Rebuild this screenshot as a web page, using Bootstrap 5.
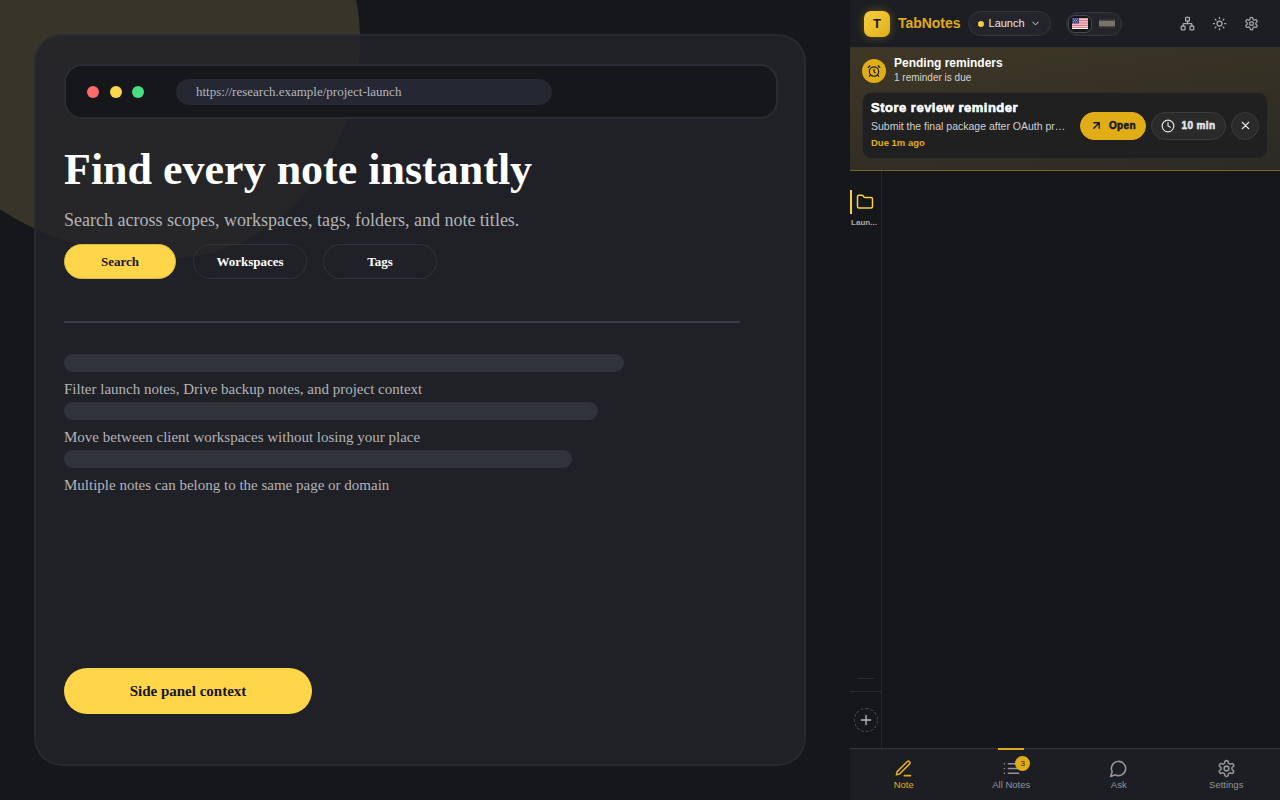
<!DOCTYPE html>
<html lang="en">
<head>
    <meta charset="UTF-8">
    <meta name="viewport" content="width=device-width, initial-scale=1.0">
    <title>TabNotes</title>
    <link href="https://cdn.jsdelivr.net/npm/bootstrap@5.3.0/dist/css/bootstrap.min.css" rel="stylesheet">
    <style>
        html, body { height: 100%; }
        body { background: #15171b; overflow: hidden; font-family: "Liberation Sans", Arial, sans-serif; }
        svg.ico { fill: none; stroke: currentColor; stroke-width: 2; stroke-linecap: round; stroke-linejoin: round; display: block; flex: none; }

        .stage { width: 850px; height: 800px; padding: 34px 44px 34px 34px; position: relative; overflow: hidden; font-family: "Liberation Serif", "Times New Roman", serif; }
        .glow { position: absolute; left: -90px; top: -160px; width: 450px; height: 418px; border-radius: 0 190px 190px 260px / 0 200px 218px 200px; background: #39342a; }
        .frame { position: relative; height: 732px; border: 2px solid rgba(48, 51, 58, .45); border-radius: 28px; background: rgba(34, 36, 41, .84); padding: 28px; display: flex; flex-direction: column; }
        .addr { height: 55px; width: 714px; flex: none; background: #15171b; border: 2px solid #292c33; border-radius: 18px; padding: 0 21px; }
        .dot { width: 12px; height: 12px; border-radius: 50%; }
        .dot-row { gap: 10.5px; }
        .url-pill { margin-left: 32px; width: 376px; height: 26px; border-radius: 13px; background: #252833; color: #b4b7bd; font-size: 13px; padding-left: 20px; line-height: 26px; }
        .hero { color: #fff; font-family: inherit; font-size: 44px; font-weight: 700; line-height: 50px; margin: 26px 0 0; }
        .sub { color: #b2b4b9; font-size: 18px; line-height: 24px; margin: 13px 0 0; }
        .pill-row { margin-top: 12px; }
        .pill { height: 35px; border-radius: 18px; font-size: 13px; font-weight: 700; display: flex; align-items: center; justify-content: center; border: 1.5px solid #30333a; color: #fff; background: transparent; padding: 0; font-family: inherit; }
        .pill-on { background: #ffd54a; color: #15171b; border-color: #d9b743; }
        .rule { width: 676px; height: 2px; background: #3a3d44; margin-top: 42px; }
        .skel { height: 18px; border-radius: 9px; background: #30333a; }
        .skel-text { color: #b2b4b9; font-size: 15px; line-height: 20px; margin: 7px 0 3px; }
        .cta { width: 248px; height: 46px; border-radius: 23px; border: 0; background: #ffd54a; color: #15171b; font-family: inherit; font-size: 15px; font-weight: 700; margin-top: auto; margin-bottom: 22px; }

        .panel { width: 430px; height: 800px; }
        .topbar { height: 48px; flex: none; background: #1c1e23; border-bottom: 1px solid #37342a; padding: 0 14px; color: #a9abb0; }
        .logo { width: 26px; height: 26px; border-radius: 7px; background: linear-gradient(135deg, #f7cf3f, #dfae1a); box-shadow: 0 0 8px rgba(234, 179, 8, .35); color: #15171b; font-size: 13px; font-weight: 700; }
        .brand { color: #e0ad17; font-size: 14px; font-weight: 700; margin-left: 8px; letter-spacing: -.03px; }
        .scope { margin-left: 7px; width: 83px; height: 25px; border-radius: 13px; border: 1px solid #33353b; background: #23252a; color: #e8e8ea; font-size: 11px; padding: 0 9px; gap: 5px; }
        .scope i { width: 6px; height: 6px; border-radius: 50%; background: #f5cf45; display: block; flex: none; }
        .flags { margin-left: 15px; width: 56px; height: 24px; border-radius: 12px; border: 1px solid #33353b; background: #23252a; padding: 1px; gap: 7px; }
        .flag-on { width: 24px; height: 18px; border-radius: 7px; border: 1px solid #474a52; background: #15171b; }
        .top-icons { gap: 17px; margin-right: 7px; }
        .band { height: 123px; flex: none; background: linear-gradient(170deg, #3f3726, #2b2a24); border-bottom: 1px solid #7a6420; padding: 8px 12px 0; }
        .alarm { width: 24px; height: 24px; border-radius: 50%; background: #e0ad17; color: #15171b; margin-top: 3px; }
        .band-title { color: #fff; font-size: 12px; font-weight: 700; line-height: 15px; }
        .band-sub { color: #d5d4ce; font-size: 10px; line-height: 14px; }
        .remind { height: 67px; margin-top: 7px; border: 1px solid #2c2c2c; border-radius: 10px; background: #202020; padding: 0 8px; }
        .remind-text { min-width: 0; margin-bottom: 2px; }
        .remind-title { color: #fff; font-size: 13px; font-weight: 700; line-height: 16px; letter-spacing: .5px; -webkit-text-stroke: .6px #fff; }
        .remind-body { color: #d0d0d0; font-size: 10.5px; line-height: 14px; margin-top: 3px; white-space: nowrap; }
        .remind-due { color: #e0ad17; font-size: 9.5px; font-weight: 700; line-height: 12px; margin-top: 4px; }
        .act { height: 28px; border-radius: 14px; font-size: 10px; font-weight: 700; letter-spacing: .4px; -webkit-text-stroke: .5px currentColor; gap: 6px; border: 1px solid #3b3b3b; background: #2a2a2a; color: #e6e6e6; padding: 0; }
        .act-open { width: 66px; background: #e0ad17; border-color: #e0ad17; color: #15171b; }
        .act-open svg { stroke-width: 2.5; }
        .act-snooze { width: 75px; margin-left: 5px; }
        .act-close { width: 28px; margin-left: 5px; }

        .middle { flex: 1; min-height: 0; }
        .rail { width: 32px; border-right: 1px solid #25272c; }
        .rail-tab { height: 25px; width: 100%; margin-top: 18px; padding-right: 2px; color: #f5cf45; position: relative; }
        .rail-mark { position: absolute; left: 0; top: 1px; width: 2px; height: 24px; background: #f5cf45; }
        .rail-label { color: #a9abb0; font-size: 8px; font-weight: 700; line-height: 10px; margin-top: 4px; padding-right: 3px; text-align: center; }
        .rail-dash { width: 16px; height: 1px; background: #2a2c31; margin: 0 auto 12px; }
        .rail-sep { height: 1px; background: #2a2c31; margin-bottom: 16px; }
        .rail-add { width: 24px; height: 24px; border-radius: 50%; border: 1px dashed #4a4c52; color: #b8babe; margin: 0 auto 16px; }

        .tabs { height: 52px; flex: none; background: #1c1e23; border-top: 1px solid #34363b; }
        .tab-item { width: 25%; color: #92949a; font-size: 9.5px; line-height: 12px; position: relative; padding-top: 10px; }
        .tab-name { margin-top: 1px; }
        .tab-on { color: #e0ad17; }
        .tab-mark { position: absolute; top: -1px; left: 50%; margin-left: -13px; width: 26px; height: 2px; background: #e0ad17; }
        .tab-count { position: absolute; top: 7px; left: 50%; margin-left: 4px; width: 15px; height: 15px; border-radius: 50%; background: #e0ad17; color: #15171b; font-size: 8px; line-height: 15px; text-align: center; }
    </style>
</head>
<body>
<div class="d-flex">
    <div class="stage">
        <div class="glow"></div>
        <div class="frame">
            <div class="addr d-flex align-items-center">
                <div class="d-flex dot-row">
                    <div class="dot" style="background:#ff6b6b"></div>
                    <div class="dot" style="background:#ffd54a"></div>
                    <div class="dot" style="background:#4ade80"></div>
                </div>
                <div class="url-pill">https://research.example/project-launch</div>
            </div>
            <h1 class="hero">Find every note instantly</h1>
            <p class="sub">Search across scopes, workspaces, tags, folders, and note titles.</p>
            <div class="d-flex pill-row">
                <button class="pill pill-on" style="width:112px">Search</button>
                <button class="pill" style="width:114px;margin-left:17px">Workspaces</button>
                <button class="pill" style="width:114px;margin-left:16px">Tags</button>
            </div>
            <div class="rule"></div>
            <div class="skel" style="width:560px;margin-top:31px"></div>
            <div class="skel-text">Filter launch notes, Drive backup notes, and project context</div>
            <div class="skel" style="width:534px"></div>
            <div class="skel-text">Move between client workspaces without losing your place</div>
            <div class="skel" style="width:508px"></div>
            <div class="skel-text">Multiple notes can belong to the same page or domain</div>
            <button class="cta">Side panel context</button>
        </div>
    </div>

    <div class="panel d-flex flex-column">
        <div class="topbar d-flex align-items-center">
            <div class="logo d-flex align-items-center justify-content-center">T</div>
            <div class="brand">TabNotes</div>
            <div class="scope d-flex align-items-center">
                <i></i><span>Launch</span>
                <svg class="ico ms-auto" width="11" height="11" viewBox="0 0 24 24"><path d="m6 9 6 6 6-6"/></svg>
            </div>
            <div class="flags d-flex align-items-center">
                <div class="flag-on d-flex align-items-center justify-content-center">
                    <svg width="16" height="11" viewBox="0 0 16 11"><rect width="16" height="11" fill="#f2f0f0"/><path d="M0 .8h16M0 2.5h16M0 4.2h16M0 5.9h16M0 7.6h16M0 9.3h16" stroke="#d9606f" stroke-width=".9"/><rect width="7" height="5.5" fill="#3e3f78"/><path d="M1 1h.8M3 1h.8M5 1h.8M2 2.5h.8M4 2.5h.8M1 4h.8M3 4h.8M5 4h.8" stroke="#dcdce8" stroke-width=".8"/></svg>
                </div>
                <svg width="16" height="11" viewBox="0 0 16 11"><rect width="16" height="11" fill="#2a2527"/><rect y="2.5" width="16" height="6" fill="#77736a"/><rect y="1.5" width="16" height="1" fill="#453a3e"/><rect y="8.5" width="16" height="1" fill="#453a3e"/></svg>
            </div>
            <div class="d-flex align-items-center ms-auto top-icons">
                <svg class="ico" width="15" height="15" viewBox="0 0 24 24"><rect x="16" y="16" width="6" height="6" rx="1"/><rect x="2" y="16" width="6" height="6" rx="1"/><rect x="9" y="2" width="6" height="6" rx="1"/><path d="M5 16v-3a1 1 0 0 1 1-1h12a1 1 0 0 1 1 1v3"/><path d="M12 12V8"/></svg>
                <svg class="ico" width="15" height="15" viewBox="0 0 24 24"><circle cx="12" cy="12" r="4"/><path d="M12 2v2M12 20v2M4.93 4.93l1.41 1.41M17.66 17.66l1.41 1.41M2 12h2M20 12h2M6.34 17.66l-1.41 1.41M19.07 4.93l-1.41 1.41"/></svg>
                <svg class="ico" width="15" height="15" viewBox="0 0 24 24"><path d="M12.22 2h-.44a2 2 0 0 0-2 2v.18a2 2 0 0 1-1 1.73l-.43.25a2 2 0 0 1-2 0l-.15-.08a2 2 0 0 0-2.73.73l-.22.38a2 2 0 0 0 .73 2.73l.15.1a2 2 0 0 1 1 1.72v.51a2 2 0 0 1-1 1.74l-.15.09a2 2 0 0 0-.73 2.73l.22.38a2 2 0 0 0 2.73.73l.15-.08a2 2 0 0 1 2 0l.43.25a2 2 0 0 1 1 1.73V20a2 2 0 0 0 2 2h.44a2 2 0 0 0 2-2v-.18a2 2 0 0 1 1-1.73l.43-.25a2 2 0 0 1 2 0l.15.08a2 2 0 0 0 2.73-.73l.22-.39a2 2 0 0 0-.73-2.73l-.15-.08a2 2 0 0 1-1-1.74v-.5a2 2 0 0 1 1-1.74l.15-.09a2 2 0 0 0 .73-2.73l-.22-.38a2 2 0 0 0-2.73-.73l-.15.08a2 2 0 0 1-2 0l-.43-.25a2 2 0 0 1-1-1.73V4a2 2 0 0 0-2-2z"/><circle cx="12" cy="12" r="3"/></svg>
            </div>
        </div>

        <div class="band">
            <div class="d-flex" style="gap:8px">
                <div class="alarm d-flex align-items-center justify-content-center">
                    <svg class="ico" width="14" height="14" viewBox="0 0 24 24"><circle cx="12" cy="13" r="8"/><path d="M12 9v4l2 2M5 3 2 6M22 6l-3-3M6.38 18.7 4 21M17.64 18.67 20 21"/></svg>
                </div>
                <div>
                    <div class="band-title">Pending reminders</div>
                    <div class="band-sub">1 reminder is due</div>
                </div>
            </div>
            <div class="remind d-flex align-items-center">
                <div class="remind-text flex-grow-1">
                    <div class="remind-title">Store review reminder</div>
                    <div class="remind-body">Submit the final package after OAuth pr…</div>
                    <div class="remind-due">Due 1m ago</div>
                </div>
                <button class="act act-open d-flex align-items-center justify-content-center">
                    <svg class="ico" width="13" height="13" viewBox="0 0 24 24"><path d="M7 7h10v10M7 17 17 7"/></svg>Open
                </button>
                <button class="act act-snooze d-flex align-items-center justify-content-center">
                    <svg class="ico" width="14" height="14" viewBox="0 0 24 24"><circle cx="12" cy="12" r="10"/><path d="M12 6v6l4 2"/></svg>10 min
                </button>
                <button class="act act-close d-flex align-items-center justify-content-center">
                    <svg class="ico" width="13" height="13" viewBox="0 0 24 24"><path d="M18 6 6 18M6 6l12 12"/></svg>
                </button>
            </div>
        </div>

        <div class="middle d-flex">
            <div class="rail d-flex flex-column">
                <div class="rail-tab d-flex justify-content-center align-items-center">
                    <div class="rail-mark"></div>
                    <svg class="ico" width="18" height="18" viewBox="0 0 24 24"><path d="M20 20a2 2 0 0 0 2-2V8a2 2 0 0 0-2-2h-7.9a2 2 0 0 1-1.69-.9L9.6 3.9A2 2 0 0 0 7.93 3H4a2 2 0 0 0-2 2v13a2 2 0 0 0 2 2Z"/></svg>
                </div>
                <div class="rail-label">Laun...</div>
                <div class="rail-dash mt-auto"></div>
                <div class="rail-sep"></div>
                <div class="rail-add d-flex align-items-center justify-content-center">
                    <svg class="ico" width="16" height="16" viewBox="0 0 24 24"><path d="M5 12h14M12 5v14"/></svg>
                </div>
            </div>
        </div>

        <div class="tabs d-flex">
            <div class="tab-item tab-on d-flex flex-column align-items-center">
                <svg class="ico" width="19" height="19" viewBox="0 0 24 24"><path d="M13 21h8"/><path d="M16.5 3.5a2.12 2.12 0 0 1 3 3L7 19l-4 1 1-4Z"/></svg>
                <span class="tab-name">Note</span>
            </div>
            <div class="tab-item d-flex flex-column align-items-center">
                <div class="tab-mark"></div>
                <svg class="ico" width="19" height="19" viewBox="0 0 24 24"><path d="M8 6h13M8 12h13M8 18h13M3 6h.01M3 12h.01M3 18h.01"/></svg>
                <span class="tab-name">All Notes</span>
                <div class="tab-count">3</div>
            </div>
            <div class="tab-item d-flex flex-column align-items-center">
                <svg class="ico" width="19" height="19" viewBox="0 0 24 24"><path d="M7.9 20A9 9 0 1 0 4 16.1L2 22Z"/></svg>
                <span class="tab-name">Ask</span>
            </div>
            <div class="tab-item d-flex flex-column align-items-center">
                <svg class="ico" width="19" height="19" viewBox="0 0 24 24"><path d="M12.22 2h-.44a2 2 0 0 0-2 2v.18a2 2 0 0 1-1 1.73l-.43.25a2 2 0 0 1-2 0l-.15-.08a2 2 0 0 0-2.73.73l-.22.38a2 2 0 0 0 .73 2.73l.15.1a2 2 0 0 1 1 1.72v.51a2 2 0 0 1-1 1.74l-.15.09a2 2 0 0 0-.73 2.73l.22.38a2 2 0 0 0 2.73.73l.15-.08a2 2 0 0 1 2 0l.43.25a2 2 0 0 1 1 1.73V20a2 2 0 0 0 2 2h.44a2 2 0 0 0 2-2v-.18a2 2 0 0 1 1-1.73l.43-.25a2 2 0 0 1 2 0l.15.08a2 2 0 0 0 2.73-.73l.22-.39a2 2 0 0 0-.73-2.73l-.15-.08a2 2 0 0 1-1-1.74v-.5a2 2 0 0 1 1-1.74l.15-.09a2 2 0 0 0 .73-2.73l-.22-.38a2 2 0 0 0-2.73-.73l-.15.08a2 2 0 0 1-2 0l-.43-.25a2 2 0 0 1-1-1.73V4a2 2 0 0 0-2-2z"/><circle cx="12" cy="12" r="3"/></svg>
                <span class="tab-name">Settings</span>
            </div>
        </div>
    </div>
</div>
</body>
</html>
